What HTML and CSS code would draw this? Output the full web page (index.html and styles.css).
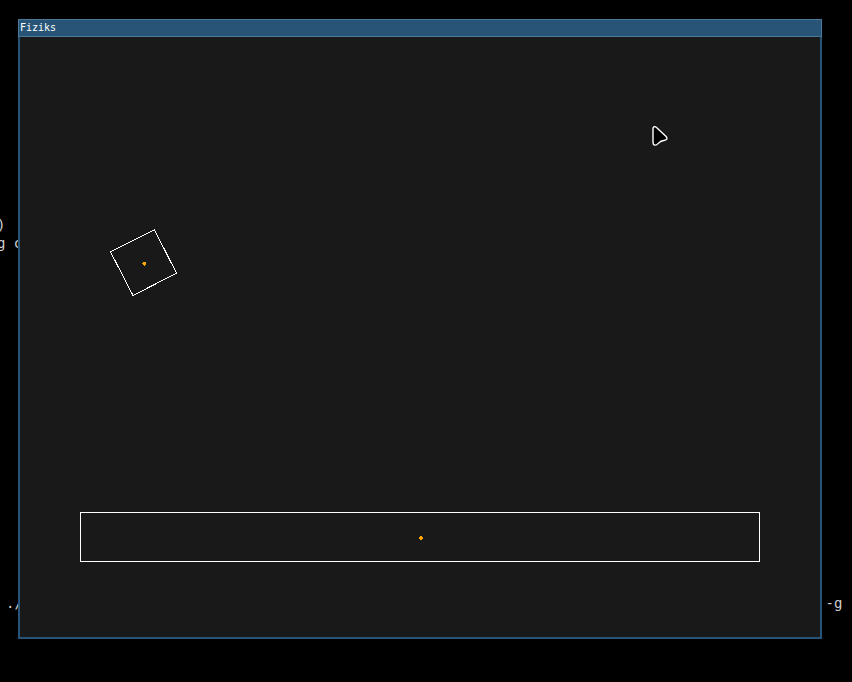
FILE: index.html
```html
<!DOCTYPE html>
<html lang="en">
<head>
<meta charset="utf-8">
<title>Fiziks</title>
<link rel="stylesheet" href="styles.css">
</head>
<body>
<main class="desktop">
  <span class="term term-paren">)</span>
  <span class="term term-flag">g c</span>
  <span class="term term-path">./</span>
  <span class="term term-option">-g</span>
  <section class="window">
    <header class="titlebar">Fiziks</header>
    <svg class="scene" viewBox="0 0 800 600" width="800" height="600">
      <g fill="none" stroke="#fff" stroke-width="1" shape-rendering="crispEdges">
        <path d="M134.4 192.7L156.5 236.2L113 258.5L90.5 214.8Z"/>
        <rect x="60.5" y="475.5" width="679" height="49"/>
      </g>
      <g fill="#ffa500" shape-rendering="crispEdges">
        <rect x="123" y="225" width="3" height="3"/>
        <rect x="122" y="226" width="4" height="1"/>
        <rect x="124" y="228" width="1" height="1"/>
        <rect x="399" y="500" width="4" height="2"/>
        <rect x="400" y="499" width="2" height="4"/>
      </g>
      <path d="M633 92C633 89.5 635 89 636.5 90.5L646.1 99.5C647.8 101.5 646.8 103 644.8 103.2C641.5 103.5 640.2 104 638 106.6C636 109 633 108.5 633 105.5Z" fill="#000" stroke="#fff" stroke-width="1.4" stroke-linejoin="round"/>
    </svg>
  </section>
</main>
</body>
</html>
```
FILE: styles.css
```css
body {
  margin: 0;
  background: #000;
}

.desktop {
  position: relative;
  box-sizing: border-box;
  width: 852px;
  height: 682px;
  padding: 19px 30px 0 18px;
  overflow: hidden;
  background: #000;
}

.term {
  position: absolute;
  font: 14px/18px "DejaVu Sans Mono", monospace;
  color: #d0d0d0;
  white-space: pre;
}

.term-paren { left: -3px; top: 216px; }
.term-flag { left: -3px; top: 234px; }
.term-path { left: 6px; top: 594px; }
.term-option { left: 825.6px; top: 594px; }

.window {
  position: relative;
  box-sizing: border-box;
  width: 804px;
  height: 620px;
  border: 2px solid #285577;
  border-top: 0;
  background: #191919;
}

.titlebar {
  box-sizing: border-box;
  height: 18px;
  margin: 0 -2px;
  padding-left: 1px;
  border: 1px solid #4c7899;
  background: #285577;
  color: #fff;
  font: 10px/16px "DejaVu Sans Mono", monospace;
}

.scene {
  display: block;
}
```
